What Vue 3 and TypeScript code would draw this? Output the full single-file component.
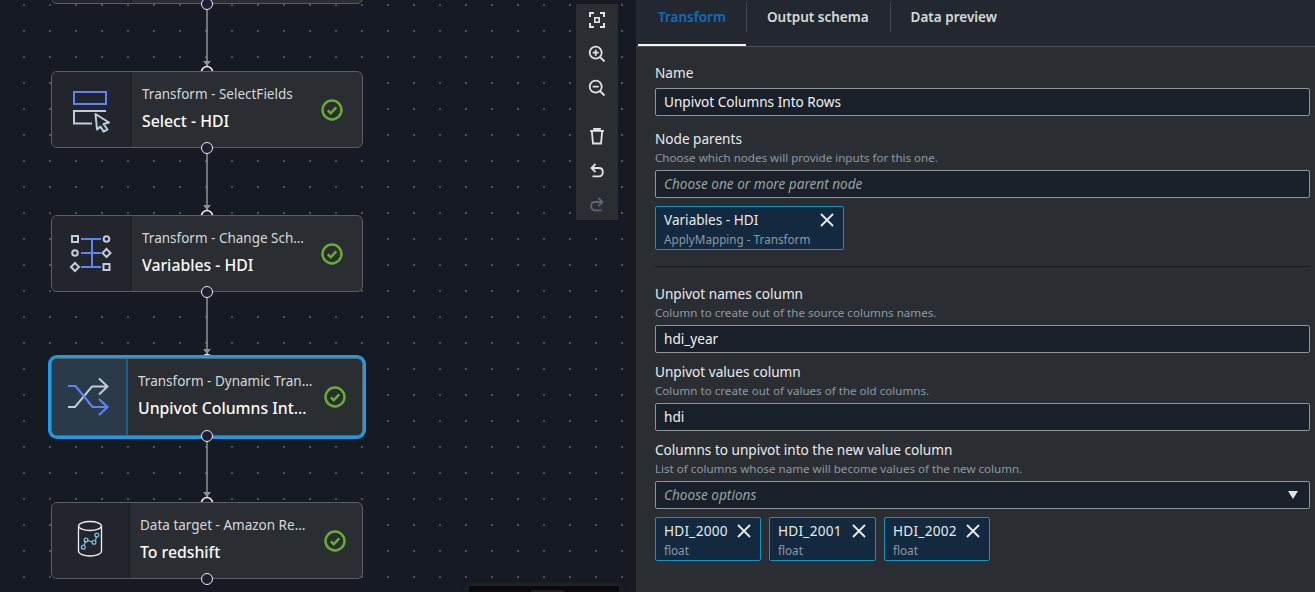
<script setup lang="ts">
interface FlowNode {
  id: string
  top: number
  height: number
  iconWidth: number
  title: string
  name: string
  selected?: boolean
  check: number
}

const nodes: FlowNode[] = [
  { id: 'prev', top: -73, height: 77, iconWidth: 80, title: '', name: '', check: 0 },
  { id: 'select', top: 71, height: 77, iconWidth: 80, title: 'Transform - SelectFields', name: 'Select - HDI', check: 20 },
  { id: 'schema', top: 215, height: 77, iconWidth: 80, title: 'Transform - Change Schema', name: 'Variables - HDI', check: 20 },
  { id: 'unpivot', top: 358, height: 78, iconWidth: 76, title: 'Transform - Dynamic Transform', name: 'Unpivot Columns Into Rows', selected: true, check: 17 },
  { id: 'target', top: 502, height: 77, iconWidth: 78, title: 'Data target - Amazon Redshift', name: 'To redshift', check: 17 }
]

const edges = [
  { y1: 4, y2: 66 },
  { y1: 148, y2: 210 },
  { y1: 292, y2: 354 },
  { y1: 436, y2: 497 }
]

const columns = ['HDI_2000', 'HDI_2001', 'HDI_2002']
</script>

<template>
  <div class="page">
    <section class="canvas">
      <svg class="edges" width="636" height="592" viewBox="0 0 636 592" fill="none">
        <g v-for="e in edges" :key="e.y1">
          <line x1="207" x2="207" :y1="e.y1" :y2="e.y2" stroke="#8f9296" stroke-width="1.5" />
          <path :d="`M203 ${e.y2 - 5}H211L207 ${e.y2}Z`" fill="#8f9296" />
          <circle cx="207" :cy="e.y2 + 6" r="5.5" fill="#1d1e33" stroke="#eceff2" stroke-width="1.5" />
        </g>
      </svg>

      <article
        v-for="n in nodes"
        :key="n.id"
        class="node"
        :class="{ selected: n.selected }"
        :style="{ top: n.top + 'px', height: n.height + 'px' }"
      >
        <div class="node-icon" :style="{ width: n.iconWidth + 'px' }">
          <svg v-if="n.id === 'select'" width="80" height="77" viewBox="0 0 80 77" fill="none" stroke-width="2">
            <rect x="23" y="21" width="32" height="12" stroke="#5b86f2" />
            <path d="M55 40H23V52.500H41" stroke="#c2cbd9" />
            <path d="M44.500 43L58 51.500L52.500 53L56.500 58.500L52.500 60.500L49.500 55.500L46 58.500Z" stroke="#c2cbd9" stroke-linejoin="round" />
          </svg>
          <svg v-else-if="n.id === 'schema'" width="80" height="77" viewBox="0 0 80 77" fill="none" stroke-width="2">
            <path d="M41 24V52M30 24H50M30 38H50M30 52H50" stroke="#5b86f2" />
            <g stroke="#c2cbd9">
              <rect x="21" y="21" width="6" height="6" />
              <circle cx="24" cy="38" r="2.800" />
              <path d="M24 48L28 52L24 56L20 52Z" />
              <circle cx="55.500" cy="24" r="2.800" />
              <path d="M55.500 34L59.500 38L55.500 42L51.500 38Z" />
              <rect x="52.500" y="49" width="6" height="6" />
            </g>
          </svg>
          <svg v-else-if="n.id === 'unpivot'" width="76" height="78" viewBox="0 0 76 78" fill="none" stroke-width="2">
            <path d="M19 51H26L43 30.500H58M50 22.500L58.500 30.500L50 38.500" stroke="#c2cbd9" />
            <path d="M19 30H26.500L43.500 51H58M50 43L58.500 51L50 59" stroke="#5b86f2" stroke-width="2.200" />
          </svg>
          <svg v-else-if="n.id === 'target'" width="78" height="77" viewBox="0 0 78 77" fill="none">
            <g stroke="#eef1f4" stroke-width="1.300">
              <ellipse cx="39" cy="24" rx="11.500" ry="4.500" />
              <path d="M27.500 24V49C27.500 52 33 54 39 54C45 54 50.500 52 50.500 49V24" />
            </g>
            <g stroke="#7fbbdc" stroke-width="1.300">
              <path d="M33 43L35 38.500M37 38.500L41 39.800M44.500 38.500L45.500 34.500" />
              <circle cx="32.300" cy="45.300" r="1.900" />
              <circle cx="35" cy="38" r="1.900" />
              <circle cx="43" cy="40.300" r="1.900" />
              <circle cx="45.800" cy="33" r="1.900" />
            </g>
          </svg>
        </div>
        <div class="node-text">
          <div class="node-title">{{ n.title }}</div>
          <div class="node-name">{{ n.name }}</div>
        </div>
        <svg v-if="n.check" class="check" :style="{ marginRight: n.check - 1 + 'px' }" width="22" height="22" viewBox="0 0 22 22" fill="none" stroke="#69ae34">
          <circle cx="11" cy="11" r="9.500" stroke-width="2.400" />
          <path d="M6.800 11.300L9.800 14.200L15.300 8.400" stroke-width="2.400" />
        </svg>
        <span class="port"></span>
      </article>

      <aside class="toolbar">
        <svg width="18" height="18" viewBox="0 0 18 18" fill="none" stroke="#dfe3e6" stroke-width="2">
          <path d="M2 6V2H6M12 2H16V6M16 12V16H12M6 16H2V12" />
          <rect x="6.800" y="6.800" width="4.400" height="4.400" stroke-width="1.600" />
        </svg>
        <svg width="18" height="18" viewBox="0 0 18 18" fill="none" stroke="#dfe3e6" stroke-width="1.800">
          <circle cx="7.700" cy="7.700" r="6" />
          <path d="M12 12L16.500 16.500M4.700 7.700H10.700M7.700 4.700V10.700" />
        </svg>
        <svg width="18" height="18" viewBox="0 0 18 18" fill="none" stroke="#dfe3e6" stroke-width="1.800">
          <circle cx="7.700" cy="7.700" r="6" />
          <path d="M12 12L16.500 16.500M4.700 7.700H10.700" />
        </svg>
        <svg class="gap" width="18" height="18" viewBox="0 0 18 18" fill="none" stroke="#dfe3e6" stroke-width="1.800">
          <path d="M2 2.800H16M3.800 2.800L5 15.500H13L14.200 2.800M6 1.800V1H12V1.800" />
        </svg>
        <svg width="18" height="18" viewBox="0 0 18 18" fill="none" stroke="#dfe3e6" stroke-width="1.800">
          <path d="M7.500 2L3.500 6L7.500 10M4 6H11C13.500 6 14.800 7.500 14.800 10C14.800 12.500 13.500 14.300 11 14.300H4.500" />
        </svg>
        <svg width="18" height="18" viewBox="0 0 18 18" fill="none" stroke="#5b6670" stroke-width="1.800">
          <path d="M10.500 2L14.500 6L10.500 10M14 6H7C4.500 6 3.200 7.500 3.200 10C3.200 12.500 4.500 14.300 7 14.300H13.500" />
        </svg>
      </aside>

      <div class="dock"><span></span></div>
    </section>

    <section class="panel">
      <nav class="tabs">
        <div class="tab active">Transform</div>
        <div class="tab">Output schema</div>
        <div class="tab">Data preview</div>
      </nav>

      <form class="form" @submit.prevent>
        <label class="label">Name</label>
        <div class="input">Unpivot Columns Into Rows</div>

        <label class="label spaced-lg">Node parents</label>
        <p class="desc">Choose which nodes will provide inputs for this one.</p>
        <div class="input placeholder">Choose one or more parent node</div>
        <div class="chips">
          <div class="chip wide">
            <div class="chip-main">
              <span>Variables - HDI</span>
              <svg class="close" width="14" height="14" viewBox="0 0 14 14" stroke="#e9ebed" stroke-width="1.800"><path d="M1 1L13 13M13 1L1 13" /></svg>
            </div>
            <div class="chip-sub">ApplyMapping - Transform</div>
          </div>
        </div>

        <hr class="divider" />

        <label class="label">Unpivot names column</label>
        <p class="desc">Column to create out of the source columns names.</p>
        <div class="input">hdi_year</div>

        <label class="label spaced">Unpivot values column</label>
        <p class="desc">Column to create out of values of the old columns.</p>
        <div class="input">hdi</div>

        <label class="label spaced">Columns to unpivot into the new value column</label>
        <p class="desc">List of columns whose name will become values of the new column.</p>
        <div class="input placeholder select">
          <span>Choose options</span>
          <svg width="10" height="8" viewBox="0 0 10 8"><path d="M0 0H10L5 8Z" fill="#dfe3e6" /></svg>
        </div>
        <div class="chips">
          <div v-for="c in columns" :key="c" class="chip column">
            <div class="chip-main">
              <span>{{ c }}</span>
              <svg class="close" width="14" height="14" viewBox="0 0 14 14" stroke="#e9ebed" stroke-width="1.800"><path d="M1 1L13 13M13 1L1 13" /></svg>
            </div>
            <div class="chip-sub">float</div>
          </div>
        </div>
      </form>
    </section>
  </div>
</template>

<style>
html, body { margin: 0; overflow: hidden; background: #161a23; }
</style>

<style scoped>
.page {
  display: flex;
  width: 1315px;
  height: 592px;
  overflow: hidden;
  font-family: "Noto Sans", sans-serif;
}
.canvas {
  position: relative;
  flex: 0 0 636px;
  overflow: hidden;
  background-color: #161a23;
  background-image: radial-gradient(circle at 1px 1px, #4e5258 0.8px, transparent 1px);
  background-size: 26px 26px;
  background-position: 23px 4px;
}
.edges { position: absolute; left: 0; top: 0; }
.node {
  position: absolute;
  left: 51px;
  width: 312px;
  box-sizing: border-box;
  display: flex;
  align-items: center;
  background: #2a2d32;
  border: 1px solid #5c6065;
  border-radius: 6px;
  z-index: 1;
}
.node.selected { box-shadow: 0 0 0 3px #1f9ae6; }
.node-icon {
  align-self: stretch;
  flex: none;
  box-sizing: border-box;
  background: #22252b;
  border-right: 2px solid #1d2025;
  border-radius: 5px 0 0 5px;
  display: flex;
}
.node-icon svg { flex: none; margin: -1px 0 0 -1px; }
.selected .node-icon { background: #2a3a48; border-right-color: #17618f; }
.selected .node-icon svg { margin: -3px 0 0 -3px; }
.node-text { flex: 1; min-width: 0; padding: 0 12px 4px 10px; }
.node-title, .node-name { overflow: hidden; white-space: nowrap; text-overflow: ellipsis; }
.node-title { font-size: 13.5px; line-height: 18px; color: #d5d9dd; }
.selected .node-title { margin-right: -4px; }
.node-name { font-size: 15.8px; line-height: 20px; margin-top: 8px; font-weight: 500; color: #fafafa; }
.check { flex: none; }
.port {
  position: absolute;
  left: 148.5px;
  bottom: -7px;
  width: 10px;
  height: 10px;
  background: #1d1e33;
  border: 1.5px solid #eceff2;
  border-radius: 50%;
}
.toolbar {
  position: absolute;
  left: 576px;
  top: 4px;
  width: 42px;
  height: 216px;
  background: #2a2e33;
  display: flex;
  flex-direction: column;
  align-items: center;
  padding-top: 7px;
  box-sizing: border-box;
  gap: 16px;
}
.toolbar .gap { margin-top: 15px; }
.dock {
  position: absolute;
  left: 469px;
  top: 586px;
  width: 150px;
  height: 6px;
  background: #0a0a0a;
  box-shadow: 0 0 6px rgba(90, 100, 100, 0.35);
}
.dock span {
  position: absolute;
  left: 62px;
  top: 4px;
  width: 33px;
  height: 2px;
  background: #1d1d1d;
}
.panel {
  flex: 1;
  min-width: 0;
  background: #2a2e33;
  display: flex;
  flex-direction: column;
}
.tabs {
  flex: none;
  height: 47px;
  box-sizing: border-box;
  display: flex;
  padding-left: 2px;
  background: #232830;
  border-bottom: 1px solid #4a4f55;
}
.tab {
  position: relative;
  padding: 0 21px;
  height: 34px;
  line-height: 34px;
  font-size: 13.5px;
  font-weight: 600;
  color: #d5dbdb;
}
.tab + .tab::before {
  content: "";
  position: absolute;
  left: 0;
  top: 2px;
  bottom: 2px;
  width: 1px;
  background: #414750;
}
.tab.active { color: #0f6cbd; width: 108px; padding: 0 20px; height: 46px; box-sizing: border-box; border-bottom: 2px solid #f4f4f4; margin-bottom: -1px; }
.form { flex: 1; padding: 17px 5px 0 19px; min-height: 0; }
.label {
  display: block;
  font-size: 13.6px;
  line-height: 18px;
  margin-bottom: 6px;
  color: #e9ebed;
}
.spaced-lg { margin-top: 14px; }
.spaced { margin-top: 10px; }
.label:has(+ .desc) { margin-bottom: 2px; }
.desc {
  margin: 0 0 4px;
  font-size: 11.6px;
  line-height: 16px;
  color: #8c9aa3;
}
.input {
  height: 28px;
  box-sizing: border-box;
  display: flex;
  align-items: center;
  justify-content: space-between;
  padding: 0 11px 1px 8px;
  border: 1px solid #8d9599;
  border-radius: 2px;
  background: #1a2029;
  font-size: 13.6px;
  color: #f2f3f3;
}
.placeholder { font-style: italic; color: #95a5a6; }
.chips { display: flex; gap: 8px; margin-top: 8px; }
.chip {
  height: 44px;
  box-sizing: border-box;
  padding: 3px 9px 0 8px;
  border: 1px solid #0a95c9;
  border-radius: 2px;
  background: #12293f;
}
.chip.wide { width: 189px; }
.chip.column { width: 106px; }
.chip.column:nth-child(2) { width: 107px; }
.chip.column .chip-main span { letter-spacing: 0.25px; }
.chip-main {
  display: flex;
  align-items: center;
  justify-content: space-between;
  gap: 9px;
  font-size: 13.6px;
  line-height: 20px;
  color: #e9ebed;
}
.close { flex: none; }
.chip-sub { font-size: 11.7px; line-height: 16px; margin-top: 1px; color: #8c9aa3; }
.divider {
  border: 0;
  height: 1px;
  margin: 16px 0 18px;
  background: #16191e;
}
</style>
